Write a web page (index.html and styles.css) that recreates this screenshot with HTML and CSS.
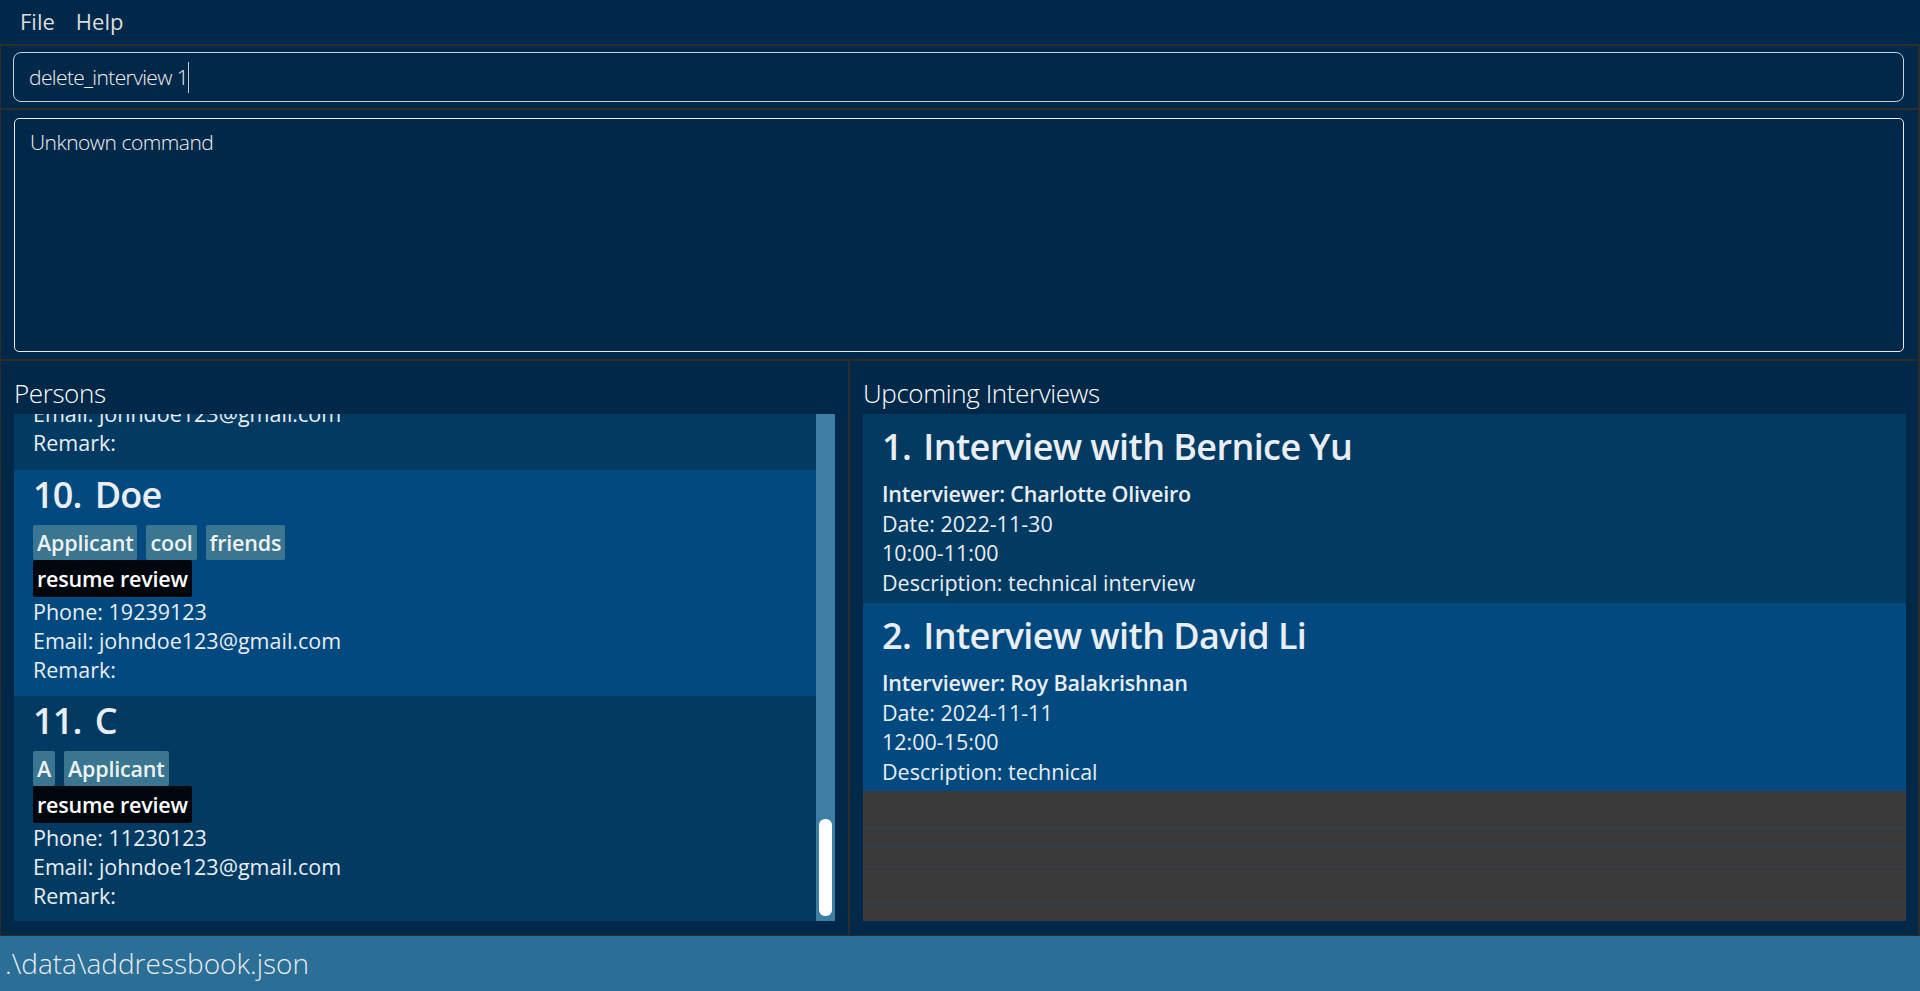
FILE: index.html
```html
<!DOCTYPE html>
<html lang="en">
<head>
<meta charset="utf-8">
<title>Address Book</title>
<link rel="stylesheet" href="styles.css">
</head>
<body>
<div class="app">
  <div class="menubar">
    <span class="menu-item">File</span>
    <span class="menu-item">Help</span>
  </div>
  <div class="cmd-section">
    <div class="cmd-box"><span class="cmd-text">delete_interview 1</span><span class="caret"></span></div>
  </div>
  <div class="result-section">
    <div class="result-box">Unknown command</div>
  </div>
  <div class="panels">
    <div class="panel panel-left">
      <div class="panel-label">Persons</div>
      <div class="list-wrap">
        <div class="list-viewport">
          <div class="card partial">
            <div class="line first">Email: johndoe123@gmail.com</div>
            <div class="line">Remark:</div>
          </div>
          <div class="card selected">
            <div class="card-name"><span class="idx">10.</span><span>Doe</span></div>
            <div class="tags"><span class="tag">Applicant</span><span class="tag">cool</span><span class="tag">friends</span></div>
            <div class="remark-tags"><span class="rtag">resume review</span></div>
            <div class="line">Phone: 19239123</div>
            <div class="line">Email: johndoe123@gmail.com</div>
            <div class="line">Remark:</div>
          </div>
          <div class="card">
            <div class="card-name"><span class="idx">11.</span><span>C</span></div>
            <div class="tags"><span class="tag">A</span><span class="tag">Applicant</span></div>
            <div class="remark-tags"><span class="rtag">resume review</span></div>
            <div class="line">Phone: 11230123</div>
            <div class="line">Email: johndoe123@gmail.com</div>
            <div class="line">Remark:</div>
          </div>
        </div>
        <div class="scrollbar"><div class="thumb"></div></div>
      </div>
    </div>
    <div class="panel-divider"></div>
    <div class="panel panel-right">
      <div class="panel-label">Upcoming Interviews</div>
      <div class="ilist">
        <div class="icard">
          <div class="icard-title"><span class="idx">1.</span><span>Interview with Bernice Yu</span></div>
          <div class="iline strong">Interviewer: Charlotte Oliveiro</div>
          <div class="iline">Date: 2022-11-30</div>
          <div class="iline">10:00-11:00</div>
          <div class="iline">Description: technical interview</div>
        </div>
        <div class="icard selected">
          <div class="icard-title"><span class="idx">2.</span><span>Interview with David Li</span></div>
          <div class="iline strong">Interviewer: Roy Balakrishnan</div>
          <div class="iline">Date: 2024-11-11</div>
          <div class="iline">12:00-15:00</div>
          <div class="iline">Description: technical</div>
        </div>
        <div class="empty-area">
          <div class="empty-row r37"></div>
          <div class="empty-row r19"></div>
          <div class="empty-row r20"></div>
          <div class="empty-row r36"></div>
          <div class="empty-row rfill"></div>
        </div>
      </div>
    </div>
  </div>
  <div class="statusbar">.\data\addressbook.json</div>
</div>
</body>
</html>
```
FILE: styles.css
```css
* { box-sizing: border-box; }
html, body { margin: 0; padding: 0; }
body {
  width: 1920px;
  height: 991px;
  overflow: hidden;
  background: #012848;
  font-family: "Open Sans", "Noto Sans", sans-serif;
  color: #e8eef4;
}
.app { display: flex; flex-direction: column; height: 991px; }

.menubar {
  height: 46px;
  background: #00284a;
  border-bottom: 2px solid #2d2d2d;
  display: flex;
  align-items: flex-start;
  padding: 6px 0 0 20px;
  gap: 21px;
}
.menu-item {
  font-size: 22px;
  line-height: 30px;
  color: #dcdcdc;
}

.cmd-section {
  height: 64px;
  padding: 6px 14px 6px 12px;
  border-left: 1px solid #2d2d2d;
  border-right: 2px solid #2d2d2d;
  border-bottom: 2px solid #2d2d2d;
  background: #012848;
}
.cmd-box {
  height: 50px;
  border: 1.5px solid #c6d1db;
  border-radius: 8px;
  display: flex;
  align-items: center;
  padding-left: 15px;
}
.cmd-text {
  font-size: 21px;
  font-weight: 300;
  color: #f0f0f0;
  letter-spacing: -0.6px;
}
.caret {
  width: 1px;
  height: 31px;
  background: #c0c8d0;
  margin-left: 0;
}

.result-section {
  height: 251px;
  padding: 8px 14px 7px 13px;
  border-left: 1px solid #2d2d2d;
  border-right: 2px solid #2d2d2d;
  border-bottom: 2px solid #2d2d2d;
  background: #012848;
}
.result-box {
  height: 234px;
  border: 1.5px solid #e8ecf0;
  border-radius: 5px;
  padding: 8px 15px;
  font-size: 21px;
  font-weight: 300;
  line-height: 30px;
  color: #f0f0f0;
  letter-spacing: -0.5px;
}

.panels {
  height: 575px;
  display: grid;
  grid-template-columns: 847px 2px 1fr;
  border-left: 1px solid #2d2d2d;
  border-right: 2px solid #2d2d2d;
  border-bottom: 1px solid #2d2d2d;
  background: #012848;
}
.panel-divider { background: #2d2d2d; }
.panel {
  display: flex;
  flex-direction: column;
  padding-top: 17px;
  padding-bottom: 13px;
  min-height: 0;
}
.panel-left { padding-left: 13px; padding-right: 13px; }
.panel-right { padding-left: 13px; padding-right: 12px; }
.panel-label {
  font-size: 26px;
  font-weight: 300;
  line-height: 30px;
  color: #ffffff;
  letter-spacing: -0.4px;
  margin-bottom: 6px;
}

.list-wrap {
  height: 507px;
  display: flex;
}
.list-viewport {
  flex: 1;
  overflow: hidden;
  background: #033a62;
}
.scrollbar {
  width: 19px;
  background: #3e7ea4;
  display: flex;
  flex-direction: column;
  justify-content: flex-end;
  align-items: center;
  padding-bottom: 5px;
}
.thumb {
  width: 13px;
  height: 97px;
  background: #ffffff;
  border-radius: 6px;
}

.card {
  height: 225px;
  background: #033a62;
  padding: 2px 19px 11px 19px;
}
.card.selected { background: #01497e; height: 226px; }
.card.partial {
  display: flow-root;
  height: 56px;
  padding-top: 0;
  padding-bottom: 0;
  overflow: hidden;
}
.line.first { margin-top: -15px; }
.card-name {
  font-size: 36px;
  font-weight: 600;
  line-height: 46px;
  display: flex;
  gap: 13px;
  letter-spacing: -0.8px;
  color: #e8eef4;
}
.tags {
  margin-top: 7px;
  display: flex;
  gap: 9px;
}
.tag {
  height: 35px;
  line-height: 35px;
  background: #3a768f;
  border-radius: 2px;
  padding: 0 4px;
  font-size: 21.5px;
  font-weight: 600;
  letter-spacing: -0.2px;
  color: #eef2f5;
}
.remark-tags { display: flex; }
.rtag {
  height: 37px;
  line-height: 37px;
  background: #01070d;
  border-radius: 2px;
  padding: 0 4px;
  font-size: 21.5px;
  font-weight: 600;
  letter-spacing: -0.2px;
  color: #ffffff;
}
.line {
  font-size: 21.5px;
  line-height: 29px;
  color: #e8eef4;
}

.ilist {
  height: 507px;
  display: flex;
  flex-direction: column;
  background: #3a3a3a;
}
.icard {
  height: 189px;
  background: #033a62;
  padding: 10px 19px 4px 19px;
}
.icard.selected { background: #01497e; height: 188px; }
.icard-title {
  font-size: 36px;
  font-weight: 600;
  line-height: 46px;
  display: flex;
  gap: 12px;
  letter-spacing: -0.6px;
  margin-bottom: 9px;
}
.iline {
  font-size: 21.5px;
  line-height: 29.5px;
}
.iline.strong { font-weight: 600; letter-spacing: -0.2px; }
.empty-area {
  flex: 1;
  display: flex;
  flex-direction: column;
}
.empty-row { border-bottom: 1px solid #34404a; }
.r37 { height: 37px; }
.r19 { height: 19px; }
.r20 { height: 20px; }
.r36 { height: 36px; }
.rfill { flex: 1; border-bottom: none; }

.statusbar {
  height: 55px;
  background: #2b6e96;
  font-size: 28px;
  font-weight: 300;
  line-height: 55px;
  padding-left: 5px;
  color: #e8ecf0;
  letter-spacing: 0;
}
```
